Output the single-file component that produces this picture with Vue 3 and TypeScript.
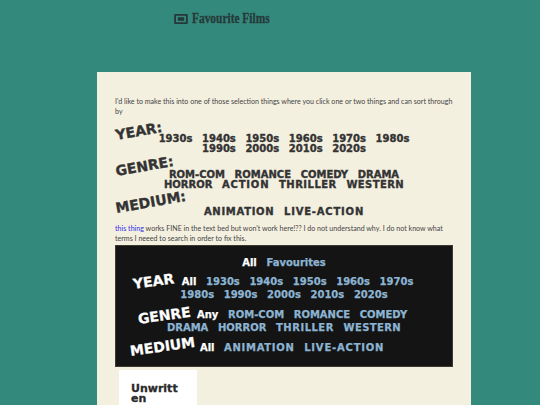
<script setup lang="ts">
interface Row { label: string; cls: string; active?: string; items: string[] }
const plain: Row[] = [
  { label: 'YEAR:', cls: 'year', items: ['1930s','1940s','1950s','1960s','1970s','1980s','1990s','2000s','2010s','2020s'] },
  { label: 'GENRE:', cls: 'genre', items: ['ROM-COM','ROMANCE','COMEDY','DRAMA','HORROR','ACTION','THRILLER','WESTERN'] },
  { label: 'MEDIUM:', cls: 'medium', items: ['ANIMATION','LIVE-ACTION'] },
]
const dark: Row[] = [
  { label: 'YEAR', cls: 'year', active: 'All', items: ['1930s','1940s','1950s','1960s','1970s','1980s','1990s','2000s','2010s','2020s'] },
  { label: 'GENRE', cls: 'genre', active: 'Any', items: ['ROM-COM','ROMANCE','COMEDY','DRAMA','HORROR','THRILLER','WESTERN'] },
  { label: 'MEDIUM', cls: 'medium', active: 'All', items: ['ANIMATION','LIVE-ACTION'] },
]
const tracking: Record<string, string> = {
  ANIMATION: '0.7px',
  'LIVE-ACTION': '0.8px',
  ACTION: '0.8px',
  THRILLER: '0.5px',
  WESTERN: '0.4px',
}
const spacing = (item: string) => ({ letterSpacing: tracking[item] ?? 'normal' })
</script>

<template>
  <div class="page">
    <header class="head">
      <svg class="icon" width="14" height="10" viewBox="0 0 15 11">
        <path fill="#26393a" fill-rule="evenodd" d="M1 0h13a1 1 0 0 1 1 1v9a1 1 0 0 1-1 1H1a1 1 0 0 1-1-1V1a1 1 0 0 1 1-1zM2 2v7h11V2z"/>
        <rect x="4" y="3.5" width="7" height="4" fill="#26393a" />
      </svg>
      <h1>Favourite Films</h1>
    </header>
    <main class="card">
      <p>I'd like to make this into one of those selection things where you click one or two things and can sort through by</p>
      <div v-for="r in plain" :key="r.label" class="row" :class="r.cls">
        <span class="label">{{ r.label }}</span>
        <span v-for="i in r.items" :key="i" class="item" :style="spacing(i)">{{ i }}</span>
      </div>
      <p class="after"><a href="#">this thing</a> works FINE in the text bed but won't work here!?? I do not understand why. I do not know what terms I neeed to search in order to fix this.</p>
      <section class="board">
        <div class="tabs"><span class="on">All</span><span class="link">Favourites</span></div>
        <div v-for="r in dark" :key="r.label" class="drow">
          <span class="dlabel" :class="r.cls">{{ r.label }}</span>
          <span class="on">{{ r.active }}</span>
          <span v-for="i in r.items" :key="i" class="link" :style="spacing(i)">{{ i }}</span>
        </div>
      </section>
      <article class="film">
        <h2>Unwritt<br />en</h2>
        <small>Mad and rapid</small>
      </article>
    </main>
  </div>
</template>

<style>
html, body { margin: 0; overflow: hidden; background: #338a7c; }
</style>

<style scoped>
.page { width: 540px; height: 405px; overflow: hidden; background: #338a7c; font-family: "Lato", sans-serif; }
.head { height: 72px; display: flex; align-items: flex-start; gap: 4px; padding: 11px 0 0 174px; box-sizing: border-box; color: #26393a; }
.icon { margin-top: 3px; }
h1 { margin: 0; font: bold 15px/15px "Liberation Serif", serif; transform: scaleX(.76); transform-origin: left center; -webkit-text-stroke: 0.3px #26393a; white-space: nowrap; }
.card { width: 338px; margin-left: 97px; padding: 25px 18px 0; background: #f4f0e0; color: #444; height: 340px; }
p { margin: 0; font-size: 7.1px; line-height: 10px; }
a { color: #2f2fe8; text-decoration: none; }
.row { position: relative; padding: 0 34px; margin-top: 16px; text-align: center; font: bold 10px/10px "DejaVu Sans", sans-serif; color: #333; -webkit-text-stroke: 0.35px #333; }
.row.year { margin-top: 17px; }
.row.medium { margin-top: 17px; }
.item { display: inline-block; margin: 0 4.8px; }
.label { position: absolute; left: 2px; top: -7px; font: bold 14px/16px "DejaVu Sans", sans-serif; transform: rotate(-10deg); transform-origin: left bottom; }
.after { margin-top: 7px; }
.board { margin-top: 1px; padding: 11px 20px 0; background: #141414; text-align: center; font: bold 10px/12.5px "DejaVu Sans", sans-serif; border: 1px solid #3a3a30; box-sizing: border-box; height: 122px; -webkit-text-stroke: 0.25px currentColor; }
.tabs { margin-bottom: 6.5px; }
.drow { margin-bottom: 8px; }
.on { color: #fff; margin: 0 4.8px; display: inline-block; }
.link { color: #8cb4d2; margin: 0 4.8px; display: inline-block; }
.dlabel { display: inline-block; vertical-align: top; text-align: left; white-space: nowrap; color: #fff; font-size: 14px; line-height: 12.5px; transform-origin: left center; }
.dlabel.year { width: 27.2px; transform: translate(-17px, 2px) rotate(-8deg); }
.dlabel.genre { width: 36.2px; transform: translate(-18px, 4px) rotate(-8deg); }
.dlabel.medium { width: 16.2px; transform: translate(-49px, 3px) rotate(-8deg); }
.film { width: 78px; margin: 3px 0 0 4px; padding: 14px 12px; background: #fff; box-sizing: border-box; color: #2a2a2a; }
h2 { margin: 0; font: bold 11px/10px "DejaVu Sans", sans-serif; -webkit-text-stroke: 0.3px #2a2a2a; }
small { font-size: 5px; line-height: 8px; color: #888; display: block; }
</style>
